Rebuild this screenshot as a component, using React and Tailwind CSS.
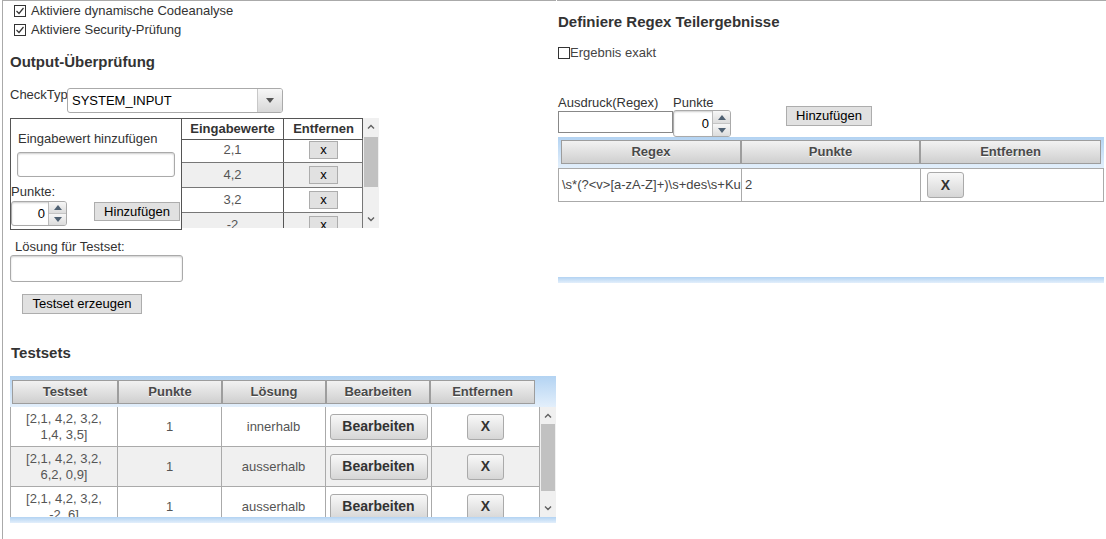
const font = "font-['Liberation_Sans',Arial,sans-serif]";

function Check({ checked }) {
  return (
    <span className="inline-flex w-[12px] h-[12px] shrink-0 border border-[#333] bg-white items-center justify-center">
      {checked && (
        <svg width="10" height="10" viewBox="0 0 10 10">
          <path d="M1.5 5 L4 7.5 L8.5 2" stroke="#333" strokeWidth="1.2" fill="none" />
        </svg>
      )}
    </span>
  );
}

function Arrow({ up, color = '#4f6173' }) {
  return (
    <svg width="8" height="5" viewBox="0 0 8 5">
      <polygon points={up ? '0,5 8,5 4,0' : '0,0 8,0 4,5'} fill={color} />
    </svg>
  );
}

function Spinner({ boxW, h }) {
  return (
    <div className={`flex ${h} border border-[#aaa] rounded-[3px] bg-white overflow-hidden shadow-[inset_0_1px_2px_rgba(0,0,0,0.2)]`}>
      <div className={`${boxW} flex items-center justify-end pr-[3px] text-[13px] text-black`}>0</div>
      <div className="w-[18px] flex flex-col border-l border-[#bbb]">
        <div className="flex-1 bg-gradient-to-b from-[#f7f7f7] to-[#dcdcdc] flex items-center justify-center border-b border-[#c4c4c4]">
          <Arrow up />
        </div>
        <div className="flex-1 bg-gradient-to-b from-[#f7f7f7] to-[#dcdcdc] flex items-center justify-center">
          <Arrow />
        </div>
      </div>
    </div>
  );
}

function FlatButton({ className = '', children }) {
  return (
    <div className={`flex items-center justify-center bg-[#e1e1e1] border border-[#adadad] text-[13px] text-black ${className}`}>
      {children}
    </div>
  );
}

function RoundButton({ className = '', children }) {
  return (
    <div className={`flex items-center justify-center rounded-[3px] bg-gradient-to-b from-[#f8f8f8] to-[#d6d6d6] border border-[#aaa] text-[13px] font-bold text-[#333] ${className}`}>
      {children}
    </div>
  );
}

function ScrollBar({ h, thumbTop, thumbH }) {
  return (
    <div className={`w-[16px] ${h} bg-[#f0f0f0] flex flex-col items-center`}>
      <div className="h-[17px] flex items-center justify-center text-[#555]">
        <svg width="8" height="5" viewBox="0 0 8 5"><path d="M1 4.5 L4 1.5 L7 4.5" stroke="#606060" strokeWidth="1.4" fill="none" /></svg>
      </div>
      <div className="flex-1 w-full relative">
        <div className={`absolute left-[1px] right-[1px] bg-[#c1c1c1] ${thumbTop} ${thumbH}`} />
      </div>
      <div className="h-[17px] flex items-center justify-center">
        <svg width="8" height="5" viewBox="0 0 8 5"><path d="M1 0.5 L4 3.5 L7 0.5" stroke="#606060" strokeWidth="1.4" fill="none" /></svg>
      </div>
    </div>
  );
}

const eingabewerte = ['2,1', '4,2', '3,2', '-2'];

const testsets = [
  { set: ['[2,1, 4,2, 3,2,', '1,4, 3,5]'], punkte: 1, loesung: 'innerhalb' },
  { set: ['[2,1, 4,2, 3,2,', '6,2, 0,9]'], punkte: 1, loesung: 'ausserhalb' },
  { set: ['[2,1, 4,2, 3,2,', '-2, 6]'], punkte: 1, loesung: 'ausserhalb' },
];

const headCell = 'flex items-center justify-center h-full bg-gradient-to-b from-[#f2f2f2] to-[#cfcfcf] border border-[#9d9d9d] text-[13px] font-bold text-[#4a4a4a] [text-shadow:0_1px_0_#fff]';

function LeftPanel() {
  return (
    <div className="w-[554px] h-[539px] border-l border-t border-[#aaa] ml-[2px] pl-[7px] flex flex-col text-[#333]">
      <div className="h-[19px] flex items-center gap-[5px] ml-[4px] text-[13px]">
        <Check checked />
        <span>Aktiviere dynamische Codeanalyse</span>
      </div>
      <div className="h-[20px] flex items-center gap-[5px] ml-[4px] text-[13px]">
        <Check checked />
        <span>Aktiviere Security-Prüfung</span>
      </div>

      <div className="mt-[13px] h-[18px] leading-[18px] text-[15px] font-bold">Output-Überprüfung</div>

      <div className="mt-[17px] flex items-start">
        <div className="w-[57px] text-[13px] leading-[15px] -mt-[1px]">CheckTyp</div>
        <div className="w-[216px] h-[25px] flex border border-[#aaa] rounded-[3px] bg-white overflow-hidden">
          <div className="flex-1 flex items-center pl-[4px] text-[13px] text-black">SYSTEM_INPUT</div>
          <div className="w-[25px] flex items-center justify-center border-l border-[#c8c8c8] bg-gradient-to-b from-[#f7f7f7] to-[#d8d8d8]">
            <Arrow color="#555" />
          </div>
        </div>
      </div>

      <div className="mt-[5px] flex items-start">
        <div className="w-[172px] h-[112px] border border-[#555] relative">
          <div className="pl-[7px] pt-[12px] text-[13px] leading-[15px]">Eingabewert hinzufügen</div>
          <div className="ml-[6px] mt-[6px] w-[158px] h-[25px] border border-[#aaa] rounded-[3px] bg-white shadow-[inset_0_1px_2px_rgba(0,0,0,0.2)]" />
          <div className="mt-[7px] text-[13px] leading-[15px]">Punkte:</div>
          <div className="flex items-start mt-[2px]">
            <Spinner boxW="w-[36px]" h="h-[25px]" />
            <FlatButton className="ml-[27px] mt-[1px] w-[86px] h-[19px]">Hinzufügen</FlatButton>
          </div>
        </div>
        <div className="w-[181px] h-[110px] overflow-hidden">
          <div className="grid grid-cols-[102px_79px] h-[20px] border-t border-r border-[#555]">
            <div className="flex items-center justify-center border-r border-b border-[#555] text-[13px] font-bold">Eingabewerte</div>
            <div className="flex items-center justify-center border-b border-[#555] text-[13px] font-bold">Entfernen</div>
          </div>
          {eingabewerte.map((v, i) => (
            <div key={v} className={`grid grid-cols-[102px_79px] h-[25px] border-r border-b border-[#777] ${i % 2 ? 'bg-[#efefef]' : 'bg-white'}`}>
              <div className="flex items-center justify-center border-r border-[#555] text-[13px] text-[#555]">{v}</div>
              <div className="flex items-center justify-center">
                <FlatButton className="w-[29px] h-[18px]">x</FlatButton>
              </div>
            </div>
          ))}
        </div>
        <ScrollBar h="h-[110px]" thumbTop="top-[2px]" thumbH="h-[50px]" />
      </div>

      <div className="mt-[9px] ml-[5px] text-[13px] leading-[15px]">Lösung für Testset:</div>
      <div className="mt-[1px] w-[173px] h-[27px] border border-[#aaa] rounded-[3px] bg-white shadow-[inset_0_1px_2px_rgba(0,0,0,0.2)]" />
      <FlatButton className="mt-[12px] ml-[12px] w-[120px] h-[20px]">Testset erzeugen</FlatButton>

      <div className="mt-[30px] ml-[1px] h-[18px] leading-[18px] text-[15px] font-bold">Testsets</div>

      <div className="mt-[14px] w-[546px] h-[147px] flex flex-col">
        <div className="h-[31px] bg-gradient-to-b from-[#b3d3f2] to-[#e3effb] pl-[2px] pt-[4px] pb-[3px]">
          <div className="grid grid-cols-[106px_104px_104px_104px_105px] h-[24px]">
            <div className={headCell}>Testset</div>
            <div className={headCell}>Punkte</div>
            <div className={headCell}>Lösung</div>
            <div className={headCell}>Bearbeiten</div>
            <div className={headCell}>Entfernen</div>
          </div>
        </div>
        <div className="flex h-[110px] bg-white">
          <div className="w-[530px] h-[110px] overflow-hidden border-l border-r border-[#aaa]">
            {testsets.map((t, i) => (
              <div key={i} className={`grid grid-cols-[107px_104px_104px_106px_107px] h-[40px] border-b border-[#aaa] text-[13px] text-[#555] ${i % 2 ? 'bg-[#f0f0f0]' : 'bg-white'}`}>
                <div className="flex flex-col items-center justify-center border-r border-[#aaa] leading-[16px]">
                  <span>{t.set[0]}</span>
                  <span>{t.set[1]}</span>
                </div>
                <div className="flex items-center justify-center border-r border-[#aaa]">{t.punkte}</div>
                <div className="flex items-center justify-center border-r border-[#aaa]">{t.loesung}</div>
                <div className="flex items-center justify-center border-r border-[#aaa]">
                  <RoundButton className="w-[98px] h-[26px] text-[14px]">Bearbeiten</RoundButton>
                </div>
                <div className="flex items-center justify-center">
                  <RoundButton className="w-[37px] h-[26px] text-[14px]">X</RoundButton>
                </div>
              </div>
            ))}
          </div>
          <ScrollBar h="h-[110px]" thumbTop="top-0" thumbH="h-[67px]" />
        </div>
        <div className="h-[6px] bg-gradient-to-b from-[#b3d3f2] to-[#e3effb]" />
      </div>
    </div>
  );
}

function RightPanel() {
  return (
    <div className="flex-1 h-[539px] border-t border-[#aaa] ml-[1px] pl-[1px] flex flex-col text-[#333]">
      <div className="mt-[12px] h-[18px] leading-[18px] text-[15px] font-bold">Definiere Regex Teilergebnisse</div>
      <div className="mt-[15px] h-[14px] flex items-center text-[13px] text-[#444]">
        <Check />
        <span>Ergebnis exakt</span>
      </div>

      <div className="mt-[35px] flex items-start">
        <div className="w-[115px] text-[13px] leading-[15px]">Ausdruck(Regex)</div>
        <div className="text-[13px] leading-[15px]">Punkte</div>
      </div>
      <div className="flex items-start">
        <div className="w-[115px] h-[22px] mt-[1px] border border-[#888] bg-white" />
        <Spinner boxW="w-[38px]" h="h-[27px]" />
        <FlatButton className="ml-[55px] -mt-[4px] w-[86px] h-[20px]">Hinzufügen</FlatButton>
      </div>

      <div className="w-[546px] flex flex-col">
        <div className="h-[31px] bg-gradient-to-b from-[#b3d3f2] to-[#e3effb] px-[3px] pt-[3px] pb-[4px]">
          <div className="grid grid-cols-[180px_179px_181px] h-[24px]">
            <div className={headCell}>Regex</div>
            <div className={headCell}>Punkte</div>
            <div className={headCell}>Entfernen</div>
          </div>
        </div>
        <div className="grid grid-cols-[183px_179px_182px] h-[34px] border border-[#aaa] bg-white text-[13px] text-[#444]">
          <div className="flex items-center pl-[3px] border-r border-[#aaa] overflow-hidden whitespace-nowrap">{'\\s*(?<v>[a-zA-Z]+)\\s+des\\s+Kurses'}</div>
          <div className="flex items-center pl-[3px] border-r border-[#aaa]">2</div>
          <div className="flex items-center pl-[6px]">
            <RoundButton className="w-[37px] h-[26px] text-[14px]">X</RoundButton>
          </div>
        </div>
        <div className="h-[75px]" />
        <div className="h-[6px] bg-gradient-to-b from-[#b3d3f2] to-[#e3effb]" />
      </div>
    </div>
  );
}

export default function App() {
  return (
    <div className={`w-[1106px] h-[539px] bg-white flex overflow-hidden ${font}`}>
      <LeftPanel />
      <RightPanel />
    </div>
  );
}
